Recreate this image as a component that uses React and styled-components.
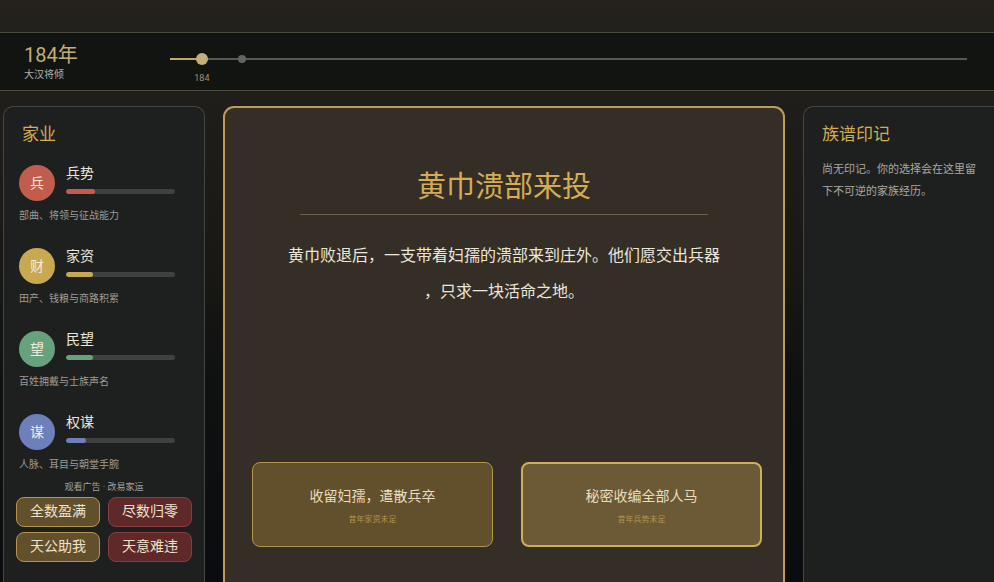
import React, { useState } from "react";
import styled, { createGlobalStyle } from "styled-components";

const GlobalStyle = createGlobalStyle`
  * {
    box-sizing: border-box;
  }

  body {
    margin: 0;
    background-color: #0b0c0e;
    font-family: Roboto, "Noto Sans CJK SC", sans-serif;
  }

  h1, h2, h3, p, ul, ol {
    margin: 0;
    padding: 0;
    font-weight: 400;
    list-style: none;
  }

  button {
    font-family: inherit;
    cursor: pointer;
  }
`;

const Page = styled.div`
  display: flex;
  flex-direction: column;
  min-height: 100vh;
  padding-top: 32px;
  overflow: hidden;
  background: linear-gradient(#25221d 0%, #1e1d19 20%, #191814 45%, #0f1111 65%, #0a0c0f 100%);
`;

const Header = styled.header`
  display: flex;
  align-items: center;
  height: 59px;
  padding: 0 27px 5px 24px;
  background-color: #121412;
  border-top: 1px solid #4c4a3f;
  border-bottom: 1px solid #4c4a3f;
`;

const YearBlock = styled.div`
  width: 146px;
  padding-top: 5px;
`;

const Year = styled.h1`
  font-size: 20px;
  line-height: 26px;
  color: #c3ae74;
`;

const Era = styled.p`
  font-size: 10px;
  line-height: 14px;
  color: #b0aeaa;
`;

const Timeline = styled.ol`
  position: relative;
  flex: 1;
  height: 2px;
  background-color: #575756;
`;

const Progress = styled.li`
  width: 4%;
  height: 2px;
  background-color: #c0a865;
`;

const TimeNode = styled.li`
  position: absolute;
  top: 50%;
  left: ${(p) => (p.$current ? "4%" : "9%")};
  width: ${(p) => (p.$current ? 12 : 8)}px;
  height: ${(p) => (p.$current ? 12 : 8)}px;
  border-radius: 50%;
  background-color: ${(p) => (p.$current ? "#c3ae7c" : "#646464")};
  transform: translate(-50%, -50%);
`;

const NodeLabel = styled.span`
  position: absolute;
  top: 19px;
  left: 50%;
  font-size: 9px;
  line-height: 12px;
  color: #a8955f;
  transform: translateX(-50%);
`;

const Board = styled.main`
  flex: 1;
  display: grid;
  grid-template-columns: 202px 1fr 191px;
  gap: 18px;
  padding: 15px 0 0 3px;
`;

const Panel = styled.section`
  padding: 17px 12px;
  background-color: #1e201f;
  border: 1px solid #454541;
  border-bottom: none;
  border-radius: 10px 10px 0 0;
`;

/* runs off the right edge of the window */
const RightPanel = styled(Panel)`
  padding: 17px 10px 17px 18px;
  border-right: none;
  border-radius: 10px 0 0 0;
`;

const PanelTitle = styled.h2`
  padding-left: ${(p) => (p.$inset ? 6 : 0)}px;
  font-size: 17px;
  line-height: 20px;
  color: #d3ac55;
`;

const MarkText = styled.p`
  margin-top: 15px;
  font-size: 11px;
  line-height: 22px;
  color: #a9a8a2;
`;

const StatList = styled.ul`
  display: flex;
  flex-direction: column;
  gap: 24px;
  padding: 20px 17px 0 3px;
`;

const StatRow = styled.div`
  display: flex;
  align-items: center;
  gap: 11px;
`;

const StatIcon = styled.span`
  flex: none;
  width: 36px;
  height: 36px;
  border-radius: 50%;
  background-color: ${(p) => p.$color};
  color: #f3ebdc;
  font-size: 14px;
  line-height: 36px;
  text-align: center;
`;

const StatBody = styled.div`
  flex: 1;
`;

const StatName = styled.h3`
  font-size: 14px;
  line-height: 18px;
  color: #ece6d8;
`;

const Track = styled.div`
  height: 5px;
  margin: 7px 0 8px;
  border-radius: 3px;
  background-color: #3f4040;
  overflow: hidden;
`;

const Fill = styled.div`
  height: 100%;
  border-radius: 3px;
  background-color: ${(p) => p.$color};
`;

const StatNote = styled.p`
  margin-top: 7px;
  font-size: 10px;
  line-height: 14px;
  color: #9d9c96;
  white-space: nowrap;
`;

const AdLabel = styled.p`
  margin: 9px 0 3px;
  font-size: 9px;
  line-height: 13px;
  text-align: center;
  color: #a3a29c;
`;

const AdGrid = styled.div`
  display: grid;
  grid-template-columns: 1fr 1fr;
  gap: 5px 8px;
`;

const AdButton = styled.button`
  height: 30px;
  padding: 0 0 2px;
  border: 1px solid ${(p) => (p.$danger ? "#8a3d40" : "#b3964c")};
  border-radius: 8px;
  background-color: ${(p) => (p.$danger ? "#5f2929" : "#624f2c")};
  color: #eee2cb;
  font-size: 14px;
  line-height: 20px;
`;

const EventCard = styled.section`
  display: flex;
  flex-direction: column;
  align-items: center;
  padding: 61px 0 35px;
  background-color: #352e26;
  border: 2px solid #bd9c56;
  border-bottom: none;
  border-radius: 11px 11px 0 0;
`;

const EventTitle = styled.h2`
  width: 73%;
  padding-bottom: 9px;
  border-bottom: 1px solid #67614f;
  font-size: 29px;
  line-height: 36px;
  text-align: center;
  color: #d3ac55;
`;

const EventText = styled.p`
  width: 440px;
  max-width: 100%;
  margin-top: 23px;
  font-size: 16px;
  line-height: 36px;
  line-break: anywhere;
  text-align: center;
  color: #ece6d8;
`;

const Choices = styled.div`
  align-self: stretch;
  display: grid;
  grid-template-columns: 1fr 1fr;
  gap: 28px;
  margin-top: auto;
  padding: 24px 21px 0 27px;
`;

const Choice = styled.button`
  display: flex;
  flex-direction: column;
  align-items: center;
  justify-content: center;
  gap: 8px;
  height: 85px;
  padding: 2px 0 0;
  border: ${(p) => (p.$active ? "2px solid #cdae59" : "1px solid #b3964c")};
  border-radius: 8px;
  background-color: ${(p) => (p.$active ? "#6c5a37" : "#624f2c")};
  color: #eadcbe;
  font-size: 14px;
  line-height: 20px;
`;

const ChoiceNote = styled.small`
  font-size: 8px;
  line-height: 12px;
  color: #b3954b;
`;

const stats = [
  { icon: "兵", name: "兵势", value: 27, color: "#c15d4c", note: "部曲、将领与征战能力" },
  { icon: "财", name: "家资", value: 25, color: "#c9a950", note: "田产、钱粮与商路积累" },
  { icon: "望", name: "民望", value: 25, color: "#67a17e", note: "百姓拥戴与士族声名" },
  { icon: "谋", name: "权谋", value: 18, color: "#6d80b9", note: "人脉、耳目与朝堂手腕" },
];

const ads = [
  { text: "全数盈满" },
  { text: "尽数归零", danger: true },
  { text: "天公助我" },
  { text: "天意难违", danger: true },
];

const choices = [
  { text: "收留妇孺，遣散兵卒", note: "昔年家资未足" },
  { text: "秘密收编全部人马", note: "昔年兵势未足" },
];

function Stat({ stat }) {
  return (
    <li>
      <StatRow>
        <StatIcon $color={stat.color}>{stat.icon}</StatIcon>
        <StatBody>
          <StatName>{stat.name}</StatName>
          <Track>
            <Fill $color={stat.color} style={{ width: `${stat.value}%` }} />
          </Track>
        </StatBody>
      </StatRow>
      <StatNote>{stat.note}</StatNote>
    </li>
  );
}

function App() {
  const [active, setActive] = useState(1);

  return (
    <>
      <GlobalStyle />
      <Page lang="zh-CN">
        <Header>
          <YearBlock>
            <Year>184年</Year>
            <Era>大汉将倾</Era>
          </YearBlock>
          <Timeline>
            <Progress />
            <TimeNode $current>
              <NodeLabel>184</NodeLabel>
            </TimeNode>
            <TimeNode />
          </Timeline>
        </Header>
        <Board>
          <Panel>
            <PanelTitle $inset>家业</PanelTitle>
            <StatList>
              {stats.map((stat) => (
                <Stat key={stat.name} stat={stat} />
              ))}
            </StatList>
            <AdLabel>观看广告 · 改易家运</AdLabel>
            <AdGrid>
              {ads.map((ad) => (
                <AdButton key={ad.text} type="button" $danger={ad.danger}>
                  {ad.text}
                </AdButton>
              ))}
            </AdGrid>
          </Panel>

          <EventCard>
            <EventTitle>黄巾溃部来投</EventTitle>
            <EventText>
              黄巾败退后，一支带着妇孺的溃部来到庄外。他们愿交出兵器，只求一块活命之地。
            </EventText>
            <Choices>
              {choices.map((choice, i) => (
                <Choice
                  key={choice.text}
                  type="button"
                  $active={i === active}
                  onMouseEnter={() => setActive(i)}
                >
                  {choice.text}
                  <ChoiceNote>{choice.note}</ChoiceNote>
                </Choice>
              ))}
            </Choices>
          </EventCard>

          <RightPanel>
            <PanelTitle>族谱印记</PanelTitle>
            <MarkText>尚无印记。你的选择会在这里留下不可逆的家族经历。</MarkText>
          </RightPanel>
        </Board>
      </Page>
    </>
  );
}

export default App;
